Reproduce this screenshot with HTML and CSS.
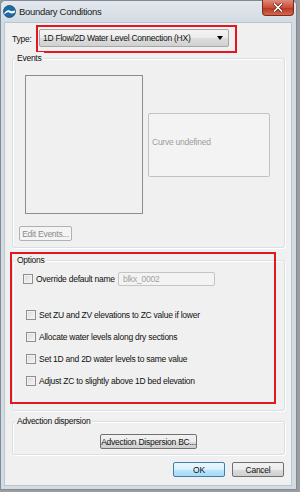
FILE: index.html
```html
<!DOCTYPE html>
<html lang="en">
<head>
  <meta charset="UTF-8">
  <title>Boundary Conditions</title>
  <link rel="stylesheet" href="styles.css">
</head>
<body>

<div class="window">
  <div class="titlebar">
    <svg class="app-icon" width="13" height="13" viewBox="0 0 13 13">
      <circle cx="6.5" cy="6.5" r="6" fill="#1d6aa5" stroke="#0f4a7a" stroke-width="0.8"/>
      <path d="M1.2 8.2 C3 5.4 5.2 4.6 6.8 5.6 C8.2 6.5 9.8 6.4 11.8 5.2 L11.9 7.6 C10 8.6 8.3 8.8 6.6 7.8 C5 6.9 3.2 7.4 1.6 9.4 Z" fill="#fff"/>
    </svg>
    <span class="title">Boundary Conditions</span>
    <div class="close-btn">
      <svg width="10" height="9" viewBox="0 0 10 9">
        <path d="M1.5 1 L8.5 8 M8.5 1 L1.5 8" stroke="#5a1a10" stroke-width="3" stroke-linecap="square"/>
        <path d="M1.5 1 L8.5 8 M8.5 1 L1.5 8" stroke="#fff" stroke-width="1.6" stroke-linecap="square"/>
      </svg>
    </div>
  </div>

  <div class="client">
    <div class="type-row">
      <span class="type-label">Type:</span>
      <div class="highlight">
        <div class="combo">
          <span>1D Flow/2D Water Level Connection (HX)</span>
          <span class="arrow"></span>
        </div>
      </div>
    </div>

    <div class="group events">
      <span class="group-label">Events</span>
      <div class="events-row">
        <div class="listbox"></div>
        <div class="curve-box">Curve undefined</div>
      </div>
      <div class="btn disabled edit-btn">Edit Events...</div>
    </div>

    <div class="group options">
      <span class="group-label">Options</span>
      <div class="override-row">
        <span class="check"></span>
        <span class="override-text">Override default name</span>
        <div class="name-input">blkx_0002</div>
      </div>
      <div class="check-list">
        <div class="check-row"><span class="check"></span>Set ZU and ZV elevations to ZC value if lower</div>
        <div class="check-row"><span class="check"></span>Allocate water levels along dry sections</div>
        <div class="check-row"><span class="check"></span>Set 1D and 2D water levels to same value</div>
        <div class="check-row"><span class="check"></span>Adjust ZC to slightly above 1D bed elevation</div>
      </div>
      <div class="options-highlight"></div>
    </div>

    <div class="group advection">
      <span class="group-label">Advection dispersion</span>
      <div class="btn adv-btn">Advection Dispersion BC...</div>
    </div>

    <div class="dialog-buttons">
      <div class="btn default">OK</div>
      <div class="btn">Cancel</div>
    </div>
  </div>
</div>

</body>
</html>
```

FILE: styles.css
```css
* {
  box-sizing: border-box;
}

body {
  margin: 0;
  background: #9c9c9c;
  font-family: 'Liberation Sans', Arial, sans-serif;
  font-size: 8.5px;
  letter-spacing: -0.25px;
  color: #111;
  white-space: nowrap;
}

.window {
  width: 297px;
  height: 490px;
  background: #d3dbe3;
  border: 1px solid #7f8b97;
  border-radius: 5px 5px 0 0;
  display: flex;
  flex-direction: column;
}

.titlebar {
  height: 21px;
  flex: none;
  display: flex;
  align-items: center;
  padding-left: 2px;
  background: linear-gradient(#e4e8ed, #d3dbe3);
  border-radius: 5px 5px 0 0;
}

.title {
  margin-left: 3px;
  font-size: 9.5px;
  letter-spacing: -0.3px;
  color: #1c1c1c;
  flex: 1;
}

.close-btn {
  align-self: flex-start;
  width: 32px;
  height: 16px;
  margin-right: 2px;
  margin-top: -1px;
  background: linear-gradient(#e08a78, #c8503a 50%, #b8341e 51%, #d2674c);
  border: 1px solid #7b2b1f;
  border-top: none;
  border-radius: 0 0 4px 4px;
  display: flex;
  align-items: center;
  justify-content: center;
}

.client {
  flex: 1;
  margin: 0 4px 3px 3px;
  background: #f0f0f0;
  border: 1px solid #bcc6d0;
  padding: 0 6px 0 7px;
  display: flex;
  flex-direction: column;
}

/* type row */

.type-row {
  display: flex;
  align-items: center;
  height: 28px;
  margin-top: 2px;
  flex: none;
}

.type-label {
  width: 24px;
}

.highlight {
  display: flex;
  width: 201px;
  height: 28px;
  border: 2px solid #e3171f;
  padding: 2px 0 0 1px;
}

.combo {
  width: 190px;
  height: 18px;
  border: 1px solid #a6a6a6;
  border-radius: 2px;
  background: linear-gradient(#f4f4f4, #ebebeb 50%, #dddddd 51%, #d1d1d1);
  display: flex;
  align-items: center;
  justify-content: space-between;
  padding: 0 5px 0 3px;
}

.arrow {
  width: 0;
  height: 0;
  border-left: 3px solid transparent;
  border-right: 3px solid transparent;
  border-top: 4px solid #000;
}

/* group boxes */

.group {
  position: relative;
  flex: none;
  border: 1px solid #d5dfe5;
  border-radius: 3px;
  box-shadow: inset 1px 1px 0 #fff, 1px 1px 0 #fff;
}

.group-label {
  position: absolute;
  top: -7px;
  left: 2px;
  padding: 0 2px;
  line-height: 12px;
  background: #f0f0f0;
}

.events {
  margin-top: 5px;
  height: 190px;
  padding: 16px 0 0 6px;
}

.events-row {
  display: flex;
  align-items: center;
  padding-left: 6px;
}

.listbox {
  width: 118px;
  height: 139px;
  border: 1px solid #8c8c8c;
  background: #f0f0f0;
}

.curve-box {
  margin-left: 5px;
  width: 122px;
  height: 64px;
  border: 1px solid #c2c2c2;
  border-radius: 2px;
  background: #f3f3f3;
  color: #9d9d9d;
  display: flex;
  align-items: center;
  padding: 0 0 5px 3px;
}

.btn {
  height: 15px;
  border: 1px solid #707070;
  border-radius: 2px;
  background: linear-gradient(#f2f2f2, #ebebeb 50%, #dddddd 51%, #cfcfcf);
  display: flex;
  align-items: center;
  justify-content: center;
}

.btn.disabled {
  border-color: #adb2b5;
  background: #f4f4f4;
  color: #8a8a8a;
}

.edit-btn {
  width: 53px;
  margin-top: 12px;
}

/* options */

.options {
  margin-top: 12px;
  height: 151px;
  padding: 11px 0 0 10px;
}

.override-row {
  display: flex;
  align-items: center;
  height: 14px;
}

.check {
  width: 10px;
  height: 10px;
  border: 1px solid #8e8f8f;
  background: linear-gradient(135deg, #d9d9d9, #f7f7f7);
  box-shadow: inset 0 0 0 1px #f2f2f2;
  margin-right: 3px;
  flex: none;
}

.override-text {
  width: 82px;
}

.name-input {
  width: 97px;
  height: 14px;
  border: 1px solid #c5c5c5;
  border-radius: 2px;
  background: #f3f3f3;
  color: #a3a3a3;
  padding-left: 4px;
  display: flex;
  align-items: center;
}

.check-list {
  margin-top: 18px;
  padding-left: 3px;
}

.check-row {
  display: flex;
  align-items: center;
  height: 22px;
}

.options-highlight {
  position: absolute;
  left: -3px;
  top: -9px;
  width: 266px;
  height: 152px;
  border: 2px solid #e3171f;
}

/* advection */

.advection {
  margin-top: 10px;
  height: 34px;
  display: flex;
  align-items: flex-start;
  justify-content: center;
  padding-top: 12px;
}

.adv-btn {
  width: 97px;
}

.dialog-buttons {
  display: flex;
  justify-content: flex-end;
  gap: 7px;
  margin-top: 7px;
  margin-right: 1px;
}

.dialog-buttons .btn {
  width: 52px;
}

.btn.default {
  border-color: #3c7fb1;
  background: linear-gradient(#eaf6fd, #d9f0fc 50%, #bee6fd 51%, #a7d9f5);
}
```
